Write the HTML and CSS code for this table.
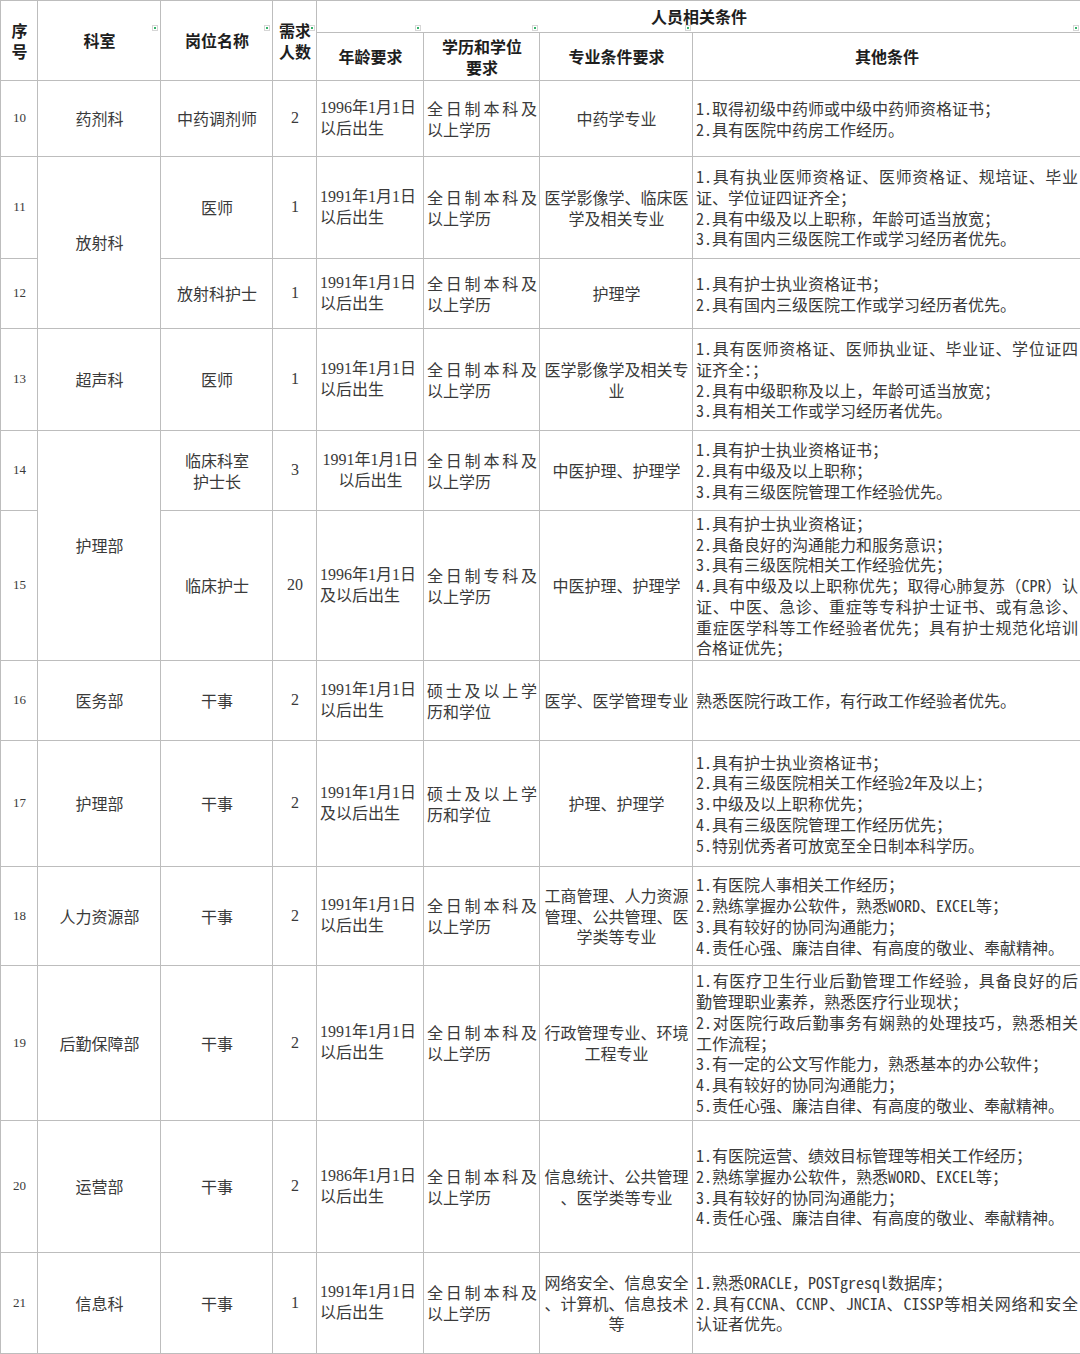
FILE: index.html
```html
<!DOCTYPE html>
<html lang="zh-CN">
<head>
<meta charset="utf-8">
<title>招聘岗位表</title>
<link rel="stylesheet" href="styles.css">
</head>
<body>
<div class="sheet">
<table class="grid">
<colgroup>
<col class="c-no"><col class="c-dept"><col class="c-post"><col class="c-num"><col class="c-age"><col class="c-edu"><col class="c-major"><col class="c-other">
</colgroup>
<thead>
<tr class="h1">
<th rowspan="2">序<br>号</th>
<th rowspan="2">科室</th>
<th rowspan="2">岗位名称</th>
<th rowspan="2">需求<br>人数</th>
<th colspan="4">人员相关条件</th>
</tr>
<tr class="h2">
<th>年龄要求</th>
<th>学历和学位<br>要求</th>
<th>专业条件要求</th>
<th>其他条件</th>
</tr>
</thead>
<tbody>
<tr class="r10">
<td class="no">10</td>
<td>药剂科</td>
<td>中药调剂师</td>
<td class="num">2</td>
<td class="age">1996年1月1日以后出生</td>
<td class="edu">全日制本科及以上学历</td>
<td class="major">中药学专业</td>
<td class="other"><div>1.取得初级中药师或中级中药师资格证书；</div><div>2.具有医院中药房工作经历。</div></td>
</tr>
<tr class="r11">
<td class="no">11</td>
<td rowspan="2">放射科</td>
<td>医师</td>
<td class="num">1</td>
<td class="age">1991年1月1日以后出生</td>
<td class="edu">全日制本科及以上学历</td>
<td class="major">医学影像学、临床医学及相关专业</td>
<td class="other"><div>1.具有执业医师资格证、医师资格证、规培证、毕业证、学位证四证齐全；</div><div>2.具有中级及以上职称，年龄可适当放宽；</div><div>3.具有国内三级医院工作或学习经历者优先。</div></td>
</tr>
<tr class="r12">
<td class="no">12</td>
<td>放射科护士</td>
<td class="num">1</td>
<td class="age">1991年1月1日以后出生</td>
<td class="edu">全日制本科及以上学历</td>
<td class="major">护理学</td>
<td class="other"><div>1.具有护士执业资格证书；</div><div>2.具有国内三级医院工作或学习经历者优先。</div></td>
</tr>
<tr class="r13">
<td class="no">13</td>
<td>超声科</td>
<td>医师</td>
<td class="num">1</td>
<td class="age">1991年1月1日以后出生</td>
<td class="edu">全日制本科及以上学历</td>
<td class="major">医学影像学及相关专业</td>
<td class="other"><div>1.具有医师资格证、医师执业证、毕业证、学位证四证齐全：；</div><div>2.具有中级职称及以上，年龄可适当放宽；</div><div>3.具有相关工作或学习经历者优先。</div></td>
</tr>
<tr class="r14">
<td class="no">14</td>
<td rowspan="2">护理部</td>
<td>临床科室<br>护士长</td>
<td class="num">3</td>
<td class="age age-c">1991年1月1日以后出生</td>
<td class="edu">全日制本科及以上学历</td>
<td class="major">中医护理、护理学</td>
<td class="other"><div>1.具有护士执业资格证书；</div><div>2.具有中级及以上职称；</div><div>3.具有三级医院管理工作经验优先。</div></td>
</tr>
<tr class="r15">
<td class="no">15</td>
<td>临床护士</td>
<td class="num">20</td>
<td class="age">1996年1月1日及以后出生</td>
<td class="edu">全日制专科及以上学历</td>
<td class="major">中医护理、护理学</td>
<td class="other"><div>1.具有护士执业资格证；</div><div>2.具备良好的沟通能力和服务意识；</div><div>3.具有三级医院相关工作经验优先；</div><div>4.具有中级及以上职称优先；取得心肺复苏（CPR）认证、中医、急诊、重症等专科护士证书、或有急诊、重症医学科等工作经验者优先；具有护士规范化培训合格证优先；</div></td>
</tr>
<tr class="r16">
<td class="no">16</td>
<td>医务部</td>
<td>干事</td>
<td class="num">2</td>
<td class="age">1991年1月1日以后出生</td>
<td class="edu">硕士及以上学历和学位</td>
<td class="major">医学、医学管理专业</td>
<td class="other"><div>熟悉医院行政工作，有行政工作经验者优先。</div></td>
</tr>
<tr class="r17">
<td class="no">17</td>
<td>护理部</td>
<td>干事</td>
<td class="num">2</td>
<td class="age">1991年1月1日及以后出生</td>
<td class="edu">硕士及以上学历和学位</td>
<td class="major">护理、护理学</td>
<td class="other"><div>1.具有护士执业资格证书；</div><div>2.具有三级医院相关工作经验2年及以上；</div><div>3.中级及以上职称优先；</div><div>4.具有三级医院管理工作经历优先；</div><div>5.特别优秀者可放宽至全日制本科学历。</div></td>
</tr>
<tr class="r18">
<td class="no">18</td>
<td>人力资源部</td>
<td>干事</td>
<td class="num">2</td>
<td class="age">1991年1月1日以后出生</td>
<td class="edu">全日制本科及以上学历</td>
<td class="major">工商管理、人力资源管理、公共管理、医学类等专业</td>
<td class="other"><div>1.有医院人事相关工作经历；</div><div>2.熟练掌握办公软件，熟悉WORD、EXCEL等；</div><div>3.具有较好的协同沟通能力；</div><div>4.责任心强、廉洁自律、有高度的敬业、奉献精神。</div></td>
</tr>
<tr class="r19">
<td class="no">19</td>
<td>后勤保障部</td>
<td>干事</td>
<td class="num">2</td>
<td class="age">1991年1月1日以后出生</td>
<td class="edu">全日制本科及以上学历</td>
<td class="major">行政管理专业、环境工程专业</td>
<td class="other"><div>1.有医疗卫生行业后勤管理工作经验，具备良好的后勤管理职业素养，熟悉医疗行业现状；</div><div>2.对医院行政后勤事务有娴熟的处理技巧，熟悉相关工作流程；</div><div>3.有一定的公文写作能力，熟悉基本的办公软件；</div><div>4.具有较好的协同沟通能力；</div><div>5.责任心强、廉洁自律、有高度的敬业、奉献精神。</div></td>
</tr>
<tr class="r20">
<td class="no">20</td>
<td>运营部</td>
<td>干事</td>
<td class="num">2</td>
<td class="age">1986年1月1日以后出生</td>
<td class="edu">全日制本科及以上学历</td>
<td class="major">信息统计、公共管理、医学类等专业</td>
<td class="other"><div>1.有医院运营、绩效目标管理等相关工作经历；</div><div>2.熟练掌握办公软件，熟悉WORD、EXCEL等；</div><div>3.具有较好的协同沟通能力；</div><div>4.责任心强、廉洁自律、有高度的敬业、奉献精神。</div></td>
</tr>
<tr class="r21">
<td class="no">21</td>
<td>信息科</td>
<td>干事</td>
<td class="num">1</td>
<td class="age">1991年1月1日以后出生</td>
<td class="edu">全日制本科及以上学历</td>
<td class="major">网络安全、信息安全、计算机、信息技术等</td>
<td class="other"><div>1.熟悉ORACLE，POSTgresql数据库；</div><div>2.具有CCNA、CCNP、JNCIA、CISSP等相关网络和安全认证者优先。</div></td>
</tr>
</tbody>
</table>
<span class="flt f1"></span><span class="flt f2"></span><span class="flt f3"></span><span class="flt f4"></span><span class="flt f5"></span><span class="flt f6"></span><span class="flt f7"></span>
</div>
</body>
</html>
```
FILE: styles.css
```css
html, body {
  margin: 0;
  padding: 0;
  background: #ffffff;
}
body {
  font-family: "Noto Sans Mono CJK SC", "Noto Sans CJK SC", sans-serif;
  font-size: 16px;
  color: #3a3a3a;
}
.sheet {
  position: relative;
  width: 1080px;
}
.grid {
  width: 1080px;
  table-layout: fixed;
  border-collapse: collapse;
}
.c-no { width: 37px; }
.c-dept { width: 123px; }
.c-post { width: 112px; }
.c-num { width: 44px; }
.c-age { width: 107px; }
.c-edu { width: 116px; }
.c-major { width: 153px; }
.c-other { width: 388px; }

.grid th,
.grid td {
  border: 1px solid #bdbdbd;
  padding: 0 2px 0 3px;
  line-height: 20.8px;
  vertical-align: middle;
  text-align: center;
  font-weight: 400;
  overflow: hidden;
}
.grid th {
  font-weight: 700;
  color: #1e1e1e;
}
.h1 { height: 32px; }
.h2 { height: 48px; }
.r10 { height: 76px; }
.r11 { height: 102px; }
.r12 { height: 70px; }
.r13 { height: 102px; }
.r14 { height: 80px; }
.r15 { height: 150px; }
.r16 { height: 80px; }
.r17 { height: 126px; }
.r18 { height: 99px; }
.r19 { height: 155px; }
.r20 { height: 132px; }
.r21 { height: 101px; }

.grid td.no {
  font-family: "Liberation Serif", "Noto Sans Mono CJK SC", serif;
  font-size: 13px;
}
.grid td.num {
  font-family: "Liberation Serif", "Noto Sans Mono CJK SC", serif;
}
.grid td.age {
  font-family: "Liberation Serif", "Noto Sans Mono CJK SC", serif;
  text-align: left;
}
.grid td.age-c {
  text-align: center;
}
.grid td.edu {
  text-align: justify;
  text-justify: inter-character;
}
.grid td.major {
  line-break: anywhere;
}
.grid td.other {
  text-align: justify;
  text-justify: inter-character;
}

.flt {
  position: absolute;
  top: 25px;
  width: 4px;
  height: 4px;
  border: 1px solid #d6d6d6;
  background: #ffffff;
}
.flt::after {
  content: "";
  position: absolute;
  left: 1px;
  top: 1px;
  width: 2px;
  height: 2px;
  background: #36b36a;
}
.f1 { left: 152px; }
.f2 { left: 264px; }
.f3 { left: 309px; }
.f4 { left: 415px; }
.f5 { left: 532px; }
.f6 { left: 685px; }
.f7 { left: 1073px; }
```
